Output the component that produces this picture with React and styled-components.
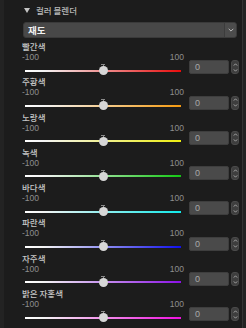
import React from "react";
import styled, { createGlobalStyle } from "styled-components";

const GlobalStyle = createGlobalStyle`
  html, body {
    margin: 0;
    padding: 0;
    background: #232323;
  }
  * {
    box-sizing: border-box;
  }
`;

const CHANNELS = [
  { name: "빨간색", color: "#e80c0c" },
  { name: "주황색", color: "#f59a10" },
  { name: "노랑색", color: "#eeee10" },
  { name: "녹색", color: "#14c814" },
  { name: "바다색", color: "#10e8e8" },
  { name: "파란색", color: "#1010ee" },
  { name: "자주색", color: "#8a10e6" },
  { name: "밝은 자홍색", color: "#f010e0" },
];

function ChannelRow({ name, color, value }) {
  return (
    <Row>
      <Label>{name}</Label>
      <Controls>
        <Range>
          <span>-100</span>
          <span>100</span>
        </Range>
        <Slider>
          <Track color={color} />
          <Tick />
          <Thumb />
        </Slider>
        <NumberBox>
          <NumberInput>{value}</NumberInput>
          <Spinner>
            <svg width="5" height="11" viewBox="0 0 5 11">
              <path d="M0.8 3.6 L2.5 1.8 L4.2 3.6" fill="none" stroke="#aaa" strokeWidth="0.9" />
              <path d="M0.8 7.4 L2.5 9.2 L4.2 7.4" fill="none" stroke="#aaa" strokeWidth="0.9" />
            </svg>
          </Spinner>
        </NumberBox>
      </Controls>
    </Row>
  );
}

export default function App() {
  return (
    <>
      <GlobalStyle />
      <Page>
        <Panel>
          <Header>
            <Caret />
            <Title>컬러 블렌더</Title>
          </Header>
          <Select>
            <SelectText>재도</SelectText>
            <SelectArrow>
              <svg width="6" height="4" viewBox="0 0 6 4">
                <path d="M0.7 0.8 L3 3.1 L5.3 0.8" fill="none" stroke="#bbb" strokeWidth="1" />
              </svg>
            </SelectArrow>
          </Select>
          <List>
            {CHANNELS.map((c) => (
              <ChannelRow key={c.name} name={c.name} color={c.color} value={0} />
            ))}
          </List>
        </Panel>
      </Page>
    </>
  );
}

const Page = styled.div`
  width: 246px;
  height: 328px;
  overflow: hidden;
  background: #232323;
  padding-left: 4px;
  padding-right: 3px;
  font-family: "Noto Sans CJK KR", "Noto Sans", sans-serif;
`;

const Panel = styled.div`
  height: 100%;
  background: #1c1c1c;
  border-right: 1px solid #343434;
  padding: 3px 0 0 0;
`;

const Header = styled.div`
  display: flex;
  align-items: center;
  height: 14px;
  padding-left: 20px;
  gap: 6px;
`;

const Caret = styled.span`
  width: 0;
  height: 0;
  border-left: 3px solid transparent;
  border-right: 3px solid transparent;
  border-top: 5px solid #c4c4c4;
`;

const Title = styled.span`
  font-size: 8.5px;
  font-weight: 500;
  color: #b8b8b8;
  line-height: 14px;
`;

const Select = styled.div`
  display: flex;
  align-items: stretch;
  margin: 5px 0 0 19px;
  width: 214px;
  height: 16px;
  background: #484848;
  border: 1px solid #3a3a3a;
  border-radius: 3px;
`;

const SelectText = styled.span`
  flex: 1;
  padding-left: 4px;
  font-size: 9.5px;
  font-weight: 700;
  color: #f2f2f2;
  line-height: 14px;
`;

const SelectArrow = styled.span`
  width: 12px;
  display: flex;
  align-items: center;
  justify-content: center;
  border-left: 1px solid #3c3c3c;
  background: #4c4c4c;
  border-radius: 0 2px 2px 0;
`;

const List = styled.div`
  display: flex;
  flex-direction: column;
  padding-top: 2px;
`;

const Row = styled.div`
  height: 35.3px;
  padding-left: 18px;
`;

const Label = styled.div`
  height: 12px;
  font-size: 8.5px;
  font-weight: 500;
  line-height: 12px;
  color: #c6c6c6;
`;

const Controls = styled.div`
  display: grid;
  grid-template-columns: 162px auto;
  grid-template-rows: 10px 13.3px;
  column-gap: 5px;
`;

const Range = styled.div`
  display: flex;
  justify-content: space-between;
  font-family: "Liberation Sans", Arial, sans-serif;
  font-size: 8.5px;
  line-height: 10px;
  color: #8e8e8e;
`;

const Slider = styled.div`
  position: relative;
  grid-column: 1;
  grid-row: 2;
  margin: 0 3px;
`;

const Track = styled.div`
  position: absolute;
  left: 0;
  right: 0;
  top: 7.5px;
  height: 2px;
  background: linear-gradient(to right, #ffffff 0%, #f4f4f4 12%, ${(p) => p.color} 100%);
`;

const Tick = styled.div`
  position: absolute;
  left: 50%;
  top: 2px;
  width: 4px;
  height: 3px;
  margin-left: -2px;
  border-top: 1px solid #8a8a8a;
  &::after {
    content: "";
    position: absolute;
    left: 1.5px;
    top: 0;
    width: 1px;
    height: 2px;
    background: #8a8a8a;
  }
`;

const Thumb = styled.div`
  position: absolute;
  left: 50%;
  top: 4px;
  width: 9px;
  height: 9px;
  margin-left: -4.5px;
  border-radius: 50%;
  background: #d6d6d6;
`;

const NumberBox = styled.div`
  grid-column: 2;
  grid-row: 1 / 3;
  align-self: end;
  display: flex;
  gap: 2px;
  margin-bottom: 1px;
`;

const NumberInput = styled.div`
  width: 40px;
  height: 14px;
  background: #4a4a4a;
  border: 1px solid #3e3e3e;
  border-radius: 2px;
  padding-left: 5px;
  font-family: "Liberation Sans", Arial, sans-serif;
  font-size: 9px;
  line-height: 12px;
  color: #a8a8a8;
`;

const Spinner = styled.div`
  width: 8px;
  height: 14px;
  background: #3e3e3e;
  border: 1px solid #4a4a4a;
  border-radius: 3px;
  display: flex;
  align-items: center;
  justify-content: center;
`;
